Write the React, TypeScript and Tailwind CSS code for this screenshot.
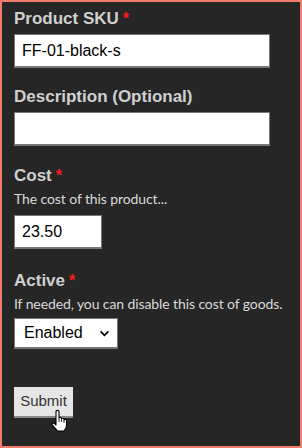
import type { ReactNode } from "react";

function Label({ children, required }: { children: ReactNode; required?: boolean }) {
  return (
    <div className="font-['Liberation_Sans',Arial,sans-serif] text-[17px] leading-[20px] font-bold text-[#d0d0d0]">
      {children}
      {required && <span className="ml-[4px] text-[16px] text-[#ff1a1a]">*</span>}
    </div>
  );
}

function Hint({ children }: { children: ReactNode }) {
  return (
    <div className="mt-[4px] font-['Source_Sans_Pro',Lato,sans-serif] text-[14px] leading-[18px] tracking-[-0.1px] text-[#dadada]">
      {children}
    </div>
  );
}

function HandCursor() {
  return (
    <svg viewBox="0 0 17 23" className="absolute left-[37px] top-[22px] h-[23px] w-[17px]" aria-hidden="true">
      <path
        d="M5 2.5C5 1 8 1 8 2.5V9C8 8 10.5 8 10.5 9.5V10C10.5 9 13 9 13 10.5V11C13 10 15.5 10 15.5 11.5V16C15.5 19 14 21 13 22H6.5C5.5 20.5 3 18 1.5 16C.5 14.5 2 13 3.5 14.5L5 16Z"
        fill="white"
        stroke="black"
        strokeWidth="1.1"
        strokeLinejoin="round"
      />
      <path d="M8 9v4M10.5 10v3M13 11v3" stroke="black" strokeWidth="0.8" />
    </svg>
  );
}

const field =
  "block h-[34px] border border-b-2 border-[#767676] bg-white px-[7px] font-['Liberation_Sans',Arial,sans-serif] text-[16px] text-black outline-none";

export default function App() {
  return (
    <div className="h-[448px] w-[302px] border-2 border-[#f47c6c] bg-[#262626] px-[12px] pt-[7px]">
      <Label required>Product SKU</Label>
      <input defaultValue="FF-01-black-s" className={`mt-[5px] w-[256px] ${field}`} />

      <div className="mt-[19px]">
        <Label>Description (Optional)</Label>
      </div>
      <input defaultValue="" className={`mt-[5px] w-[256px] ${field}`} />

      <div className="mt-[20px]">
        <Label required>Cost</Label>
      </div>
      <Hint>The cost of this product...</Hint>
      <input defaultValue="23.50" className={`mt-[7px] w-[88px] ${field}`} />

      <div className="mt-[22px]">
        <Label required>Active</Label>
      </div>
      <Hint>If needed, you can disable this cost of goods.</Hint>
      <div className="mt-[5px] flex h-[31px] w-[104px] items-center justify-between border border-b-2 border-[#767676] bg-white pl-[9px] pr-[7px] font-['Liberation_Sans',Arial,sans-serif] text-[16px] text-black">
        <span>Enabled</span>
        <svg viewBox="0 0 12 8" className="h-[7px] w-[11px]" aria-hidden="true">
          <path d="M1.5 1.5 6 6l4.5-4.5" fill="none" stroke="black" strokeWidth="2" />
        </svg>
      </div>

      <div className="relative mt-[38px] w-fit">
        <button className="block h-[31px] w-[59px] border-b-2 border-[#8a8a8a] bg-[#e6e6e6] font-['Liberation_Sans',Arial,sans-serif] text-[15px] text-[#333]">
          Submit
        </button>
        <HandCursor />
      </div>
    </div>
  );
}
